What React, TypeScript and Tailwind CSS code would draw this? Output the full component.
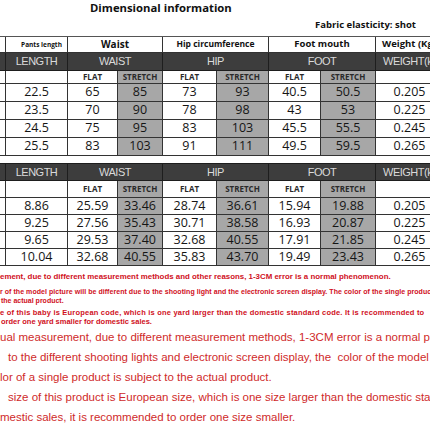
import React from "react";

const CELL = "flex items-center justify-center border-r border-b border-[#333] overflow-hidden whitespace-nowrap";
const DARK = "flex items-center justify-center border-r border-b border-[#1e1e1e] bg-[#3d3d3d] text-[#dadada] overflow-hidden whitespace-nowrap font-['Liberation_Sans',Arial,sans-serif] text-[11px] tracking-[-0.5px]";
const SUBW = "flex items-center justify-center border-r border-b border-[#333] bg-white text-[#2a2a2a] overflow-hidden whitespace-nowrap font-bold text-[8px]";
const SUBG = "flex items-center justify-center border-r border-b border-[#333] bg-[#a7a7a7] text-[#2a2a2a] overflow-hidden whitespace-nowrap font-bold text-[8px]";
const DW = "flex items-center justify-center border-r border-b border-[#333] bg-white text-[#151515] overflow-hidden whitespace-nowrap text-[12.5px]";
const DG = "flex items-center justify-center border-r border-b border-[#333] bg-[#a7a7a7] text-[#151515] overflow-hidden whitespace-nowrap text-[12.5px]";

const t1 = [
  ["22.5", "65", "85", "73", "93", "40.5", "50.5", "0.205"],
  ["23.5", "70", "90", "78", "98", "43", "53", "0.225"],
  ["24.5", "75", "95", "83", "103", "45.5", "55.5", "0.245"],
  ["25.5", "83", "103", "91", "111", "49.5", "59.5", "0.265"],
];
const t2 = [
  ["8.86", "25.59", "33.46", "28.74", "36.61", "15.94", "19.88", "0.205"],
  ["9.25", "27.56", "35.43", "30.71", "38.58", "16.93", "20.87", "0.225"],
  ["9.65", "29.53", "37.40", "32.68", "40.55", "17.91", "21.85", "0.245"],
  ["10.04", "32.68", "40.55", "35.83", "43.70", "19.49", "23.43", "0.265"],
];

function DarkRow() {
  return (
    <>
      <div className={DARK}></div>
      <div className={DARK}>LENGTH</div>
      <div className={DARK + " col-span-2"}>WAIST</div>
      <div className={DARK + " col-span-2"}>HIP</div>
      <div className={DARK + " col-span-2"}>FOOT</div>
      <div className={DARK + " !justify-start pl-[7px]"}>WEIGHT(kg)</div>
    </>
  );
}

function SubRow() {
  return (
    <>
      <div className={SUBW}></div>
      <div className={SUBW}></div>
      <div className={SUBW}>FLAT</div>
      <div className={SUBG}>STRETCH</div>
      <div className={SUBW}>FLAT</div>
      <div className={SUBG}>STRETCH</div>
      <div className={SUBW}>FLAT</div>
      <div className={SUBG}>STRETCH</div>
      <div className={SUBW}></div>
    </>
  );
}

function DataRows({ rows }: { rows: string[][] }) {
  return (
    <>
      {rows.map((r, i) => (
        <React.Fragment key={i}>
          <div className={DW}></div>
          {r.map((v, j) => (
            <div key={j} className={j === 2 || j === 4 || j === 6 ? DG : DW}>
              {v}
            </div>
          ))}
        </React.Fragment>
      ))}
    </>
  );
}

export default function App() {
  return (
    <div className="w-[430px] h-[430px] overflow-hidden bg-white font-['Open_Sans',Arial,sans-serif] text-[#111]">
      <div className="pt-[1px]">
        <div className="h-[14px] leading-[14px] pl-[90px] font-bold text-[11.3px] whitespace-nowrap">Dimensional information</div>
        <div className="mt-[4px] h-[12px] leading-[12px] pl-[315px] font-bold text-[9.5px] whitespace-nowrap">Fabric elasticity: shot</div>
      </div>

      <div className="mt-[5px] w-[444px] grid grid-cols-[6px_62px_50px_45px_54px_52px_52px_55px_68px] grid-rows-[16px_18px_13px_18px_18px_18px_18px] border-t border-[#555]">
        <div className={CELL}></div>
        <div className={CELL + " font-bold text-[6.5px] pl-[10px]"}>Pants length</div>
        <div className={CELL + " col-span-2 font-bold text-[10px]"}>Waist</div>
        <div className={CELL + " col-span-2 font-bold text-[8.5px]"}>Hip circumference</div>
        <div className={CELL + " col-span-2 font-bold text-[9.5px]"}>Foot mouth</div>
        <div className={CELL + " !justify-start pl-[6px] font-bold text-[9.5px]"}>Weight (Kg)</div>
        <DarkRow />
        <SubRow />
        <DataRows rows={t1} />
      </div>

      <div className="mt-[7px] w-[444px] grid grid-cols-[6px_62px_50px_45px_54px_52px_52px_55px_68px] grid-rows-[17px_17px_17px_17px_17px_17px] border-t border-[#1e1e1e]">
        <DarkRow />
        <SubRow />
        <DataRows rows={t2} />
      </div>

      <div className="font-['Liberation_Sans',Arial,sans-serif] text-[#d0101c] whitespace-nowrap overflow-hidden">
        <div className="mt-[6px] h-[10px] leading-[10px] font-bold text-[7.9px]">ement, due to different measurement methods and other reasons, 1-3CM error is a normal phenomenon.</div>
        <div className="mt-[5px] h-[9px] leading-[9px] font-bold text-[7px] tracking-[0.05px]">r of the model picture will be different due to the shooting light and the electronic screen display. The color of the single product is subject to</div>
        <div className="h-[9px] leading-[9px] font-bold text-[7px] pl-[1px]">the actual product.</div>
        <div className="mt-[3px] h-[9px] leading-[9px] font-bold text-[7.5px] tracking-[0.2px]">e of this baby is European code, which is one yard larger than the domestic standard code. It is recommended to</div>
        <div className="h-[9px] leading-[9px] font-bold text-[7.5px] pl-[1px]">order one yard smaller for domestic sales.</div>
        <div className="text-[#cf2a2a] text-[11.5px]">
          <div className="mt-[1px] h-[20px] leading-[20px]">ual measurement, due to different measurement methods, 1-3CM error is a normal phenomenon.</div>
          <div className="h-[20px] leading-[20px] pl-[8px]">to the different shooting lights and electronic screen display, the&nbsp; color of the model picture</div>
          <div className="h-[20px] leading-[20px]">lor of a single product is subject to the actual product.</div>
          <div className="h-[20px] leading-[20px] pl-[8px]">size of this product is European size, which is one size larger than the domestic standard</div>
          <div className="h-[20px] leading-[20px]">mestic sales, it is recommended to order one size smaller.</div>
        </div>
      </div>
    </div>
  );
}
